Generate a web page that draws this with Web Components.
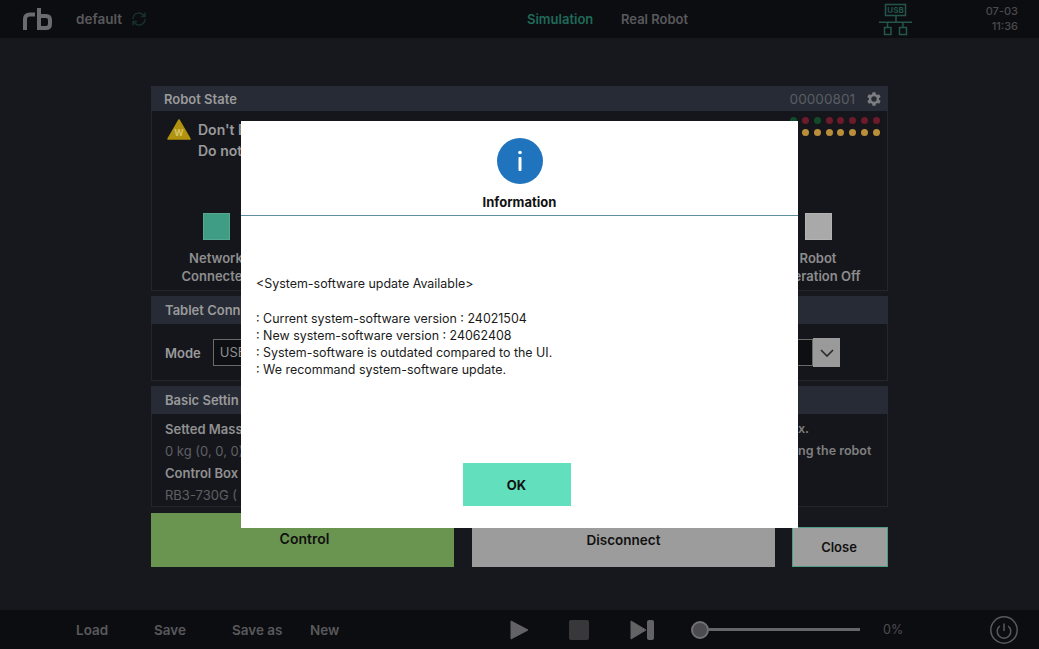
<!DOCTYPE html>
<html>
<head>
<meta charset="utf-8">
<title>Robot State</title>
<style>
  html, body { margin: 0; height: 100%; background: #16181d; }
  body { font-family: Inter, "Noto Sans", sans-serif; overflow: hidden; }
</style>
</head>
<body>
<rb-app></rb-app>

<script>
// top bar: logo, program name, mode tabs, connection icon, clock
class RbTopBar extends HTMLElement {
  constructor() {
    super();
    this.attachShadow({mode: 'open'});
    this.shadowRoot.innerHTML = /* html */ `
    <style>
      :host { display: grid; grid-template-columns: 527px 94px 258px 105px 1fr; align-items: center; height: 38px; background: #0c0d11; color: #59595c; font-size: 13px; font-weight: 600; }
      .left { display: flex; align-items: center; padding-left: 23px; }
      .name { margin-left: 24px; font-size: 13.5px; }
      .sync { margin-left: 9px; margin-right: 0; }
      .sim { color: #1f6a58; }
      .usb { display: block; }
      .clock { text-align: right; padding-right: 21px; font-size: 11px; font-weight: 500; line-height: 15px; color: #4a4a4e; }
    </style>
    <div class="left">
      <svg width="29" height="22" viewBox="0 0 29 22" fill="none" stroke="#6b6b6d" stroke-width="4">
        <path d="M2 22V11Q2 6.500 7 6.500H12"/>
        <path d="M16 0V20H23Q27 20 27 16V12Q27 8 23 8H16"/>
      </svg>
      <span class="name">default</span>
      <svg class="sync" width="16" height="16" viewBox="0 0 16 16" fill="none" stroke="#17302c" stroke-width="1.500">
        <path d="M2 8a6 6 0 0 1 10.400-4.100L14 5.500M14 1.500v4h-4"/>
        <path d="M14 8a6 6 0 0 1-10.400 4.100L2 10.500M2 14.500v-4h4"/>
      </svg>
    </div>
    <span class="sim">Simulation</span>
    <span>Real Robot</span>
    <svg class="usb" width="34" height="34" viewBox="0 0 34 34" fill="none" stroke="#24564b" stroke-width="1.500">
      <rect x="6.500" y="2.500" width="20" height="11"/>
      <path d="M17 13.500v6.500M0 20.250h33M8.500 20.250v5M24 20.250v5"/>
      <rect x="5.500" y="25.500" width="6.500" height="7"/>
      <rect x="20.500" y="25.500" width="7" height="7"/>
      <text x="16.500" y="11" text-anchor="middle" font-family="Inter, sans-serif" font-size="8" font-weight="700" fill="#24564b" stroke="none">USB</text>
    </svg>
    <div class="clock">07-03<br>11:36</div>
    `;
  }
}
customElements.define('rb-top-bar', RbTopBar);

// panel with dark title strip, title goes in the attribute
class RbPanel extends HTMLElement {
  constructor() {
    super();
    this.attachShadow({mode: 'open'});
    this.shadowRoot.innerHTML = /* html */ `
    <style>
      :host { display: flex; flex-direction: column; background: #15161b; box-shadow: inset 0 0 0 1px #23262d; }
      header { display: flex; align-items: center; justify-content: space-between; flex: none; height: var(--head, 28px); padding: 0 7px 0 var(--pad, 14px); background: #262b35; color: #9a9a9b; font-size: 13px; font-weight: 600; }
      .body { flex: 1; min-height: 0; }
    </style>
    <header><span id="title"></span><slot name="extra"></slot></header>
    <div class="body"><slot></slot></div>
    `;
  }

  connectedCallback() {
    this.shadowRoot.querySelector('#title').textContent = this.getAttribute('title');
  }
}
customElements.define('rb-panel', RbPanel);

// square lamp with caption under it
class RbLamp extends HTMLElement {
  constructor() {
    super();
    this.attachShadow({mode: 'open'});
    this.shadowRoot.innerHTML = /* html */ `
    <style>
      :host { display: flex; flex-direction: column; align-items: center; width: 130px; color: #8d8d8e; font-size: 13px; font-weight: 600; line-height: 18px; text-align: center; white-space: nowrap; }
      i { display: block; width: 27px; height: 27px; margin-bottom: 9px; box-sizing: border-box; border: 1px solid rgba(255,255,255,.12); background: var(--lamp); }
    </style>
    <i></i>
    <slot></slot>
    `;
  }
}
customElements.define('rb-lamp', RbLamp);

// two rows of indicator dots, top right of the state panel
class RbDots extends HTMLElement {
  constructor() {
    super();
    this.attachShadow({mode: 'open'});
    const top = ['#134a2c', '#6d1a2a', '#134a2c', '#6d1a2a', '#6d1a2a', '#6d1a2a', '#6d1a2a', '#6d1a2a'];
    const dots = top.map(c => `<i style="background:${c}"></i>`).join('')
      + top.map(() => `<i style="background:#b98f3a"></i>`).join('');
    this.shadowRoot.innerHTML = /* html */ `
    <style>
      :host { display: grid; grid-template-columns: repeat(8, 7px); align-content: start; gap: 5px 4.860px; padding-top: 1px; }
      i { display: block; width: 7px; height: 7px; border-radius: 50%; }
    </style>
    ${dots}
    `;
  }
}
customElements.define('rb-dots', RbDots);

class RbStatePanel extends HTMLElement {
  constructor() {
    super();
    this.attachShadow({mode: 'open'});
    this.shadowRoot.innerHTML = /* html */ `
    <style>
      :host { display: block; height: 205px; --head: 25px; --pad: 13px; }
      rb-panel { height: 100%; }
      .id { display: flex; align-items: center; gap: 12px; color: #5b5d62; font-size: 13.600px; font-weight: 400; }
      .top { display: flex; justify-content: space-between; height: 102px; box-sizing: border-box; padding: 5px 8px 0 16px; }
      .warn { display: flex; gap: 7px; margin-top: 2px; color: #9a9a9b; font-size: 14px; font-weight: 600; line-height: 21px; }
      .warn svg { margin-top: 1px; }
      .warn div { margin-top: 1px; }
      .lamps { display: flex; justify-content: space-between; padding-right: 5px; }
    </style>
    <rb-panel title="Robot State">
      <span class="id" slot="extra">00000801
        <svg width="14" height="14" viewBox="4 3 18 18" fill="#7d7e82"><path d="M19.400 13a7.600 7.600 0 0 0 0-2l2.100-1.600-2-3.500-2.500 1a7.600 7.600 0 0 0-1.700-1L15 3.200h-4l-.4 2.700a7.600 7.600 0 0 0-1.700 1l-2.500-1-2 3.500L6.500 11a7.600 7.600 0 0 0 0 2l-2.100 1.600 2 3.500 2.500-1a7.600 7.600 0 0 0 1.700 1l.4 2.700h4l.4-2.700a7.600 7.600 0 0 0 1.700-1l2.500 1 2-3.500zM13 15.500a3.500 3.500 0 1 1 0-7 3.500 3.500 0 0 1 0 7z"/></svg>
      </span>
      <div class="top">
        <div class="warn">
          <svg width="24" height="21" viewBox="0 0 24 21"><path d="M12 1 23 20H1z" fill="#b1930f" stroke="#b1930f" stroke-width="1.500" stroke-linejoin="round"/><text x="12" y="17" text-anchor="middle" font-family="Inter, sans-serif" font-size="9" font-weight="700" fill="#d8c566">W</text></svg>
          <div>Don't B<br>Do not</div>
        </div>
        <rb-dots></rb-dots>
      </div>
      <div class="lamps">
        <rb-lamp style="--lamp:#3f9c85">Network<br>Connected</rb-lamp>
        <rb-lamp style="--lamp:#a9a9a9">Robot<br>Operation Off</rb-lamp>
      </div>
    </rb-panel>
    `;
  }
}
customElements.define('rb-state-panel', RbStatePanel);

class RbTabletPanel extends HTMLElement {
  constructor() {
    super();
    this.attachShadow({mode: 'open'});
    this.shadowRoot.innerHTML = /* html */ `
    <style>
      :host { display: block; height: 85px; }
      rb-panel { height: 100%; }
      .row { display: flex; align-items: center; height: 57px; padding: 0 48px 0 14px; color: #9a9a9b; font-size: 13px; font-weight: 600; }
      .select { display: flex; flex: 1; align-items: center; height: 29px; margin-left: 12px; }
      .value { flex: 1; align-self: center; box-sizing: border-box; height: 27px; line-height: 25px; padding-left: 6px; border: 1px solid #6a6a6b; background: #0e0f13; color: #8d8d8e; font-weight: 400; }
      .arrow { display: flex; align-items: center; justify-content: center; width: 27px; height: 29px; background: #9a9a9a; }
    </style>
    <rb-panel title="Tablet Conn">
      <div class="row">Mode
        <div class="select">
          <div class="value">USB</div>
          <div class="arrow"><svg width="14" height="8" viewBox="0 0 14 8" fill="none" stroke="#26282c" stroke-width="1.600"><path d="M1 1l6 6 6-6"/></svg></div>
        </div>
      </div>
    </rb-panel>
    `;
  }
}
customElements.define('rb-tablet-panel', RbTabletPanel);

class RbBasicPanel extends HTMLElement {
  constructor() {
    super();
    this.attachShadow({mode: 'open'});
    this.shadowRoot.innerHTML = /* html */ `
    <style>
      :host { display: block; height: 121px; }
      rb-panel { height: 100%; }
      .cols { display: flex; justify-content: space-between; padding: 4px 0 0 14px; font-size: 13px; line-height: 22px; color: #5f6064; }
      b { display: block; color: #909091; font-weight: 600; }
      .right { width: 90px; color: #7f7f80; font-size: 12.500px; font-weight: 600; white-space: nowrap; }
    </style>
    <rb-panel title="Basic Settin">
      <div class="cols">
        <div>
          <b>Setted Mass</b>
          <div>0 kg (0, 0, 0)</div>
          <b>Control Box</b>
          <div>RB3-730G (</div>
        </div>
        <div class="right">x.<br>ng the robot</div>
      </div>
    </rb-panel>
    `;
  }
}
customElements.define('rb-basic-panel', RbBasicPanel);

class RbActions extends HTMLElement {
  constructor() {
    super();
    this.attachShadow({mode: 'open'});
    this.shadowRoot.innerHTML = /* html */ `
    <style>
      :host { display: flex; align-items: flex-end; height: 54px; margin-top: 6px; color: #111; font-size: 13.500px; font-weight: 600; }
      div { display: flex; align-items: center; justify-content: center; box-sizing: border-box; }
      .control { width: 303px; height: 54px; background: #6a9550; padding: 0 0 3px 4px; font-size: 14px; }
      .disconnect { width: 303px; height: 54px; margin-left: 18px; background: #9c9c9c; }
      .close { width: 96px; height: 40px; margin-left: 17px; padding-right: 2px; background: #9e9e9e; border: 1px solid #4f9b84; font-size: 13px; }
    </style>
    <div class="control">Control</div>
    <div class="disconnect">Disconnect</div>
    <div class="close">Close</div>
    `;
  }
}
customElements.define('rb-actions', RbActions);

// bottom bar: file actions, transport buttons, speed slider, power
class RbBottomBar extends HTMLElement {
  constructor() {
    super();
    this.attachShadow({mode: 'open'});
    this.shadowRoot.innerHTML = /* html */ `
    <style>
      :host { display: flex; align-items: center; height: 39px; padding-left: 76px; background: #0c0d11; color: #59595c; font-size: 13.500px; font-weight: 600; }
      .file { width: 78px; flex: none; }
      svg { display: block; flex: none; }
      .play { margin-left: 122px; }
      .stop { margin-left: 40px; }
      .next { margin-left: 41px; }
      .slider { display: flex; align-items: center; width: 169px; margin-left: 37px; }
      .thumb { width: 14px; height: 14px; flex: none; border: 2px solid #717173; border-radius: 50%; background: #4c4c4e; }
      .track { flex: 1; height: 3px; background: #66666a; }
      .pct { margin-left: 23px; font-size: 12.500px; font-weight: 400; color: #4d4d50; }
      .power { margin-left: 87px; }
    </style>
    <span class="file">Load</span>
    <span class="file">Save</span>
    <span class="file">Save as</span>
    <span class="file">New</span>
    <svg class="play" width="19" height="20" viewBox="0 0 19 20"><path d="M1 1 18 10 1 19z" fill="#636365" stroke="#636365" stroke-linejoin="round"/></svg>
    <svg class="stop" width="20" height="20" viewBox="0 0 20 20"><rect width="20" height="20" rx="2" fill="#38383a"/></svg>
    <svg class="next" width="24" height="20" viewBox="0 0 24 20"><path d="M1 1 16 10 1 19z" fill="#636365" stroke="#636365" stroke-linejoin="round"/><rect x="17" width="7" height="20" rx="2" fill="#636365"/></svg>
    <div class="slider"><div class="thumb"></div><div class="track"></div></div>
    <span class="pct">0%</span>
    <svg class="power" width="28" height="28" viewBox="0 0 28 28" fill="none" stroke="#5a5a5c" stroke-width="1.500"><circle cx="14" cy="14" r="13.200"/><path d="M9.800 10a6.800 6.800 0 1 0 8.400 0M14 7.500V15"/></svg>
    `;
  }
}
customElements.define('rb-bottom-bar', RbBottomBar);

// modal, centred on the window over the whole page
class RbDialog extends HTMLElement {
  constructor() {
    super();
    this.attachShadow({mode: 'open'});
    this.shadowRoot.innerHTML = /* html */ `
    <style>
      :host { position: fixed; inset: 0; display: flex; align-items: center; justify-content: center; }
      .box { display: flex; flex-direction: column; width: 557px; height: 407px; background: #fff; color: #1a1a1a; }
      .head { display: flex; flex-direction: column; align-items: center; flex: none; height: 95px; padding-top: 17px; box-sizing: border-box; border-bottom: 1px solid #5f8ea0; }
      .head svg { display: block; }
      .head span { margin-top: 10px; font-size: 13px; font-weight: 700; color: #111; line-height: 17px; }
      .text { flex: 1; margin: 0; padding: 59px 0 0 15px; font-size: 12.450px; line-height: 17.300px; white-space: pre-line; }
      .foot { display: flex; justify-content: center; flex: none; height: 65px; padding-right: 6px; }
      button { width: 108px; height: 43px; padding: 0; border: 0; border-radius: 0; background: #62e0bd; color: #111; font: 700 13px Inter, sans-serif; }
    </style>
    <div class="box">
      <div class="head">
        <svg width="46" height="46" viewBox="0 0 46 46"><circle cx="23" cy="23" r="23" fill="#1f74bd"/><rect x="21.500" y="19" width="3" height="14" rx="1" fill="#fff"/><circle cx="23" cy="14.500" r="1.800" fill="#fff"/></svg>
        <span>Information</span>
      </div>
      <p class="text"><slot></slot></p>
      <div class="foot"><button>OK</button></div>
    </div>
    `;
  }
}
customElements.define('rb-dialog', RbDialog);

class RbApp extends HTMLElement {
  constructor() {
    super();
    this.attachShadow({mode: 'open'});
    this.shadowRoot.innerHTML = /* html */ `
    <style>
      :host { display: flex; flex-direction: column; height: 649px; background: #16181d; }
      main { display: flex; flex-direction: column; flex: 1; gap: 5px; width: 737px; padding: 48px 0 0 151px; }
      rb-actions { margin-top: 1px; }
    </style>
    <rb-top-bar></rb-top-bar>
    <main>
      <rb-state-panel></rb-state-panel>
      <rb-tablet-panel></rb-tablet-panel>
      <rb-basic-panel></rb-basic-panel>
      <rb-actions></rb-actions>
    </main>
    <rb-bottom-bar></rb-bottom-bar>
    <rb-dialog>&lt;System-software update Available&gt;

: Current system-software version : 24021504
: New system-software version : 24062408
: System-software is outdated compared to the UI.
: We recommand system-software update.</rb-dialog>
    `;
  }
}
customElements.define('rb-app', RbApp);
</script>
</body>
</html>
